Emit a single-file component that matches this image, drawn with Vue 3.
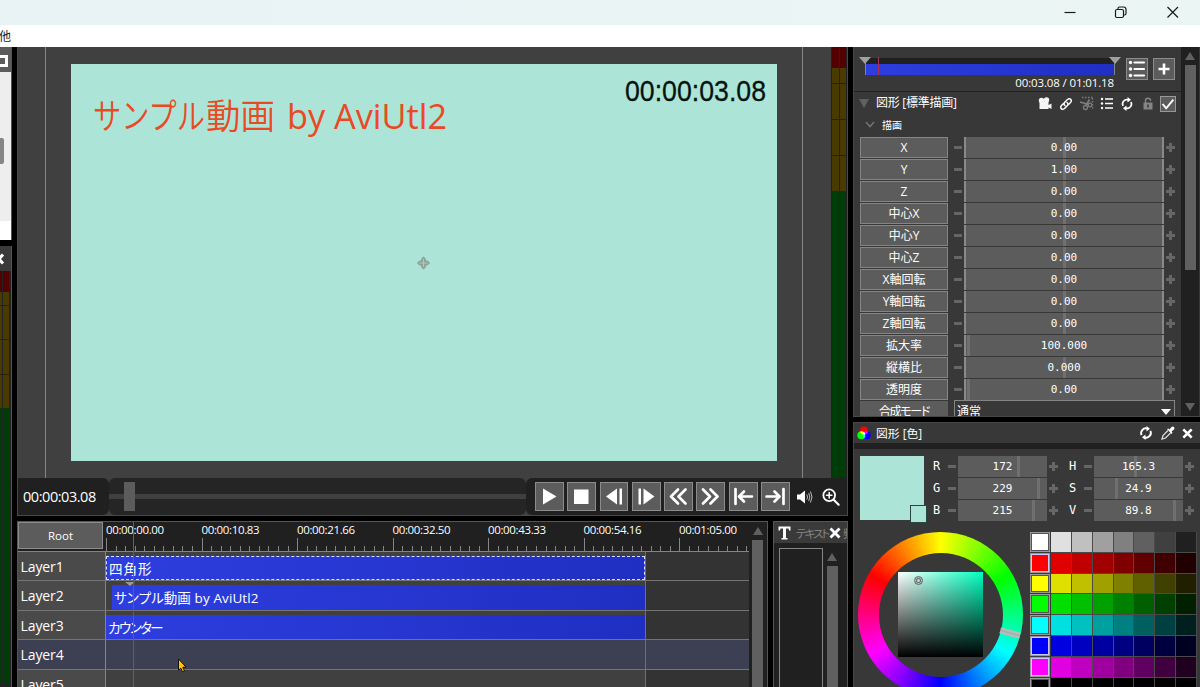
<script setup>
import { ref, computed } from 'vue';

const currentTime = ref('00:00:03.08');
const selectedLayer = ref(4);

const params = [
    { label: 'X', value: '0.00', mark: 50 },
    { label: 'Y', value: '1.00', mark: 50 },
    { label: 'Z', value: '0.00', mark: 50 },
    { label: '中心X', value: '0.00', mark: 50 },
    { label: '中心Y', value: '0.00', mark: 50 },
    { label: '中心Z', value: '0.00', mark: 50 },
    { label: 'X軸回転', value: '0.00', mark: 50 },
    { label: 'Y軸回転', value: '0.00', mark: 50 },
    { label: 'Z軸回転', value: '0.00', mark: 50 },
    { label: '拡大率', value: '100.000', mark: 1 },
    { label: '縦横比', value: '0.000', mark: 50 },
    { label: '透明度', value: '0.00', mark: 1 }
];

const rgb = [
    { label: 'R', value: '172', mark: 67 },
    { label: 'G', value: '229', mark: 90 },
    { label: 'B', value: '215', mark: 84 }
];
const hsv = [
    { label: 'H', value: '165.3', mark: 46 },
    { label: 'S', value: '24.9', mark: 25 },
    { label: 'V', value: '89.8', mark: 90 }
];

const layers = [
    { id: 1, clip: '四角形', offset: 0, selected: true },
    { id: 2, clip: 'サンプル動画 by AviUtl2', offset: 6 },
    { id: 3, clip: 'カウンター', offset: 0, kana: true },
    { id: 4 },
    { id: 5 }
];

const rulerLabels = ['00:00:00.00', '00:00:10.83', '00:00:21.66', '00:00:32.50', '00:00:43.33', '00:00:54.16', '00:01:05.00'];
const tickStep = 9.555;
const ticks = Array.from({ length: 68 }, (_, i) => ({
    x: Math.round(i * tickStep) + 0.5,
    top: i % 10 === 0 ? 16 : 24
}));

const transport = ['play', 'stop', 'prev', 'next', 'rew', 'ff', 'first', 'last'];

// Palette: one hue per row, darkening from left to right
const hues = [[1, 1, 1], [1, 0, 0], [1, 1, 0], [0, 1, 0], [0, 1, 1], [0, 0, 1], [1, 0, 1], [0, 0, 0]];
const levels = [255, 224, 192, 160, 128, 96, 64, 32];
const palette = computed(() =>
    hues.map(h => levels.map(l => `rgb(${h.map(c => c * l).join(',')})`))
);
</script>

<template>
<div class="app">
    <header class="titlebar">
        <svg width="120" height="25" viewBox="0 0 120 25" fill="none" stroke="#1a1a1a" stroke-width="1.2">
            <path d="M4.500 12.500H15.500" />
            <rect x="55.500" y="9.500" width="8" height="8" rx="1.500" />
            <path d="M58 9V8.500Q58 7 59.500 7H63.500Q66 7 66 9.500V13.500Q66 15 64.500 15H64" />
            <path d="M107.500 7L118 17.500M118 7L107.500 17.500" />
        </svg>
    </header>
    <nav class="menubar"><span>他</span></nav>

    <main class="body">
        <aside class="left">
            <div class="left-top">
                <div class="left-head"><i class="maxi"></i></div>
                <div class="left-list"><i></i></div>
            </div>
            <div class="left-meter">
                <div class="left-head2">
                    <svg width="12" height="24" viewBox="0 0 12 24"><path d="M-5 8.500L3 17.500M3 8.500L-5 17.500" stroke="#fff" stroke-width="3" /></svg>
                </div>
                <div class="meter-body"><div class="meter-col"></div><div class="meter-col narrow"></div></div>
            </div>
        </aside>

        <section class="center">
            <div class="preview-panel">
                <div class="preview">
                    <div class="stage">
                        <svg class="canvas" width="706" height="397" viewBox="0 0 706 397">
                            <text class="movie-title" y="64.500">
                                <tspan x="22" textLength="112" lengthAdjust="spacingAndGlyphs">サンプル</tspan><tspan x="135" textLength="69" lengthAdjust="spacingAndGlyphs">動画</tspan><tspan class="latin" x="216" textLength="160" lengthAdjust="spacingAndGlyphs">by AviUtl2</tspan>
                            </text>
                            <text class="counter" x="554" y="36.500" textLength="141" lengthAdjust="spacingAndGlyphs">{{ currentTime }}</text>
                            <path d="M352.500 192.800L354.500 195V197H356.500L358.700 199L356.500 201H354.500V203L352.500 205.200L350.500 203V201H348.500L346.300 199L348.500 197H350.500V195Z" fill="#8fa59e" stroke="#84988f" stroke-width=".7" />
                            <path d="M352.500 195V203M348.500 199H356.500" stroke="#b9cfc8" stroke-width=".8" />
                        </svg>
                    </div>
                    <div class="level">
                        <div class="level-col"></div>
                        <div class="level-col"></div>
                    </div>
                </div>

                <div class="controls">
                    <div class="timebox">{{ currentTime }}</div>
                    <div class="seek"><div class="seek-line"></div><div class="seek-thumb"></div></div>
                    <div class="buttons">
                        <button v-for="t in transport" :key="t" class="tbtn">
                            <svg width="27" height="27" viewBox="0 0 27 27" fill="#fff">
                                <path v-if="t === 'play'" d="M7 5.500L20.500 13.500L7 21.500Z" />
                                <rect v-else-if="t === 'stop'" x="6" y="6.500" width="14.500" height="14.500" />
                                <path v-else-if="t === 'prev'" d="M5 13.500L16 5.500V21.500ZM18.500 5.500H21V21.500H18.500Z" />
                                <path v-else-if="t === 'next'" d="M5.500 5.500H8V21.500H5.500ZM10.500 5.500L21.500 13.500L10.500 21.500Z" />
                                <g v-else fill="none" stroke="#fff" stroke-width="2.700" stroke-linecap="round" stroke-linejoin="round">
                                    <path v-if="t === 'rew'" d="M13 6.500L6 13.500L13 20.500M20.500 6.500L13.500 13.500L20.500 20.500" />
                                    <path v-else-if="t === 'ff'" d="M6 6.500L13 13.500L6 20.500M13.500 6.500L20.500 13.500L13.500 20.500" />
                                    <path v-else-if="t === 'first'" d="M5.500 6V21M22 13.500H9.500M14 8.500L9 13.500L14 18.500" />
                                    <path v-else d="M21.500 6V21M4.500 13.500H17M12.500 8.500L17.500 13.500L12.500 18.500" />
                                </g>
                            </svg>
                        </button>
                        <svg class="speaker" width="17" height="16" viewBox="0 0 17 16">
                            <path d="M1 5.500H4L9 1.500V14.500L4 10.500H1Z" fill="#fff" />
                            <path d="M10.800 5.500Q12.300 8 10.800 10.500M12.700 4Q15 8 12.700 12M14.500 2.500Q17.500 8 14.500 13.500" fill="none" stroke="#bbb" stroke-width="1" />
                        </svg>
                        <svg width="18" height="18" viewBox="0 0 20 20" fill="none" stroke="#fff" stroke-width="2" stroke-linecap="round">
                            <circle cx="8" cy="8" r="6.500" />
                            <path d="M13 13L18.500 18.500" stroke-width="2.400" />
                            <path d="M8 5V11M5 8H11" stroke-width="1.700" />
                        </svg>
                    </div>
                </div>
            </div>

            <div class="bottom">
                <div class="timeline">
                    <div class="tl-main">
                        <div class="tl-head">
                            <button class="root">Root</button>
                            <div class="ruler">
                                <div class="ruler-labels"><span v-for="l in rulerLabels" :key="l">{{ l }}</span></div>
                                <svg class="ticks" width="643" height="30" viewBox="0 0 643 30">
                                    <path v-for="t in ticks" :key="t.x" :d="`M${t.x} ${t.top}V30`" stroke="#858585" />
                                </svg>
                            </div>
                        </div>
                        <div v-for="l in layers" :key="l.id" class="layer" :class="{ active: l.id === selectedLayer }">
                            <div class="layer-name">Layer{{ l.id }}</div>
                            <div class="lane">
                                <div class="in-range">
                                    <div v-if="l.clip" class="clip" :class="{ selected: l.selected, kana: l.kana }" :style="{ marginLeft: l.offset + 'px' }">
                                        <span>{{ l.clip }}</span>
                                    </div>
                                </div>
                            </div>
                        </div>
                        <i class="playhead"></i>
                        <i class="keymark"></i>
                        <svg class="cursor" width="12" height="16" viewBox="0 0 12 16"><path d="M1.500 1L9 9L5.800 9.300L7.500 13L5.300 13.700L4 10.300L1.500 12Z" fill="#ffc20e" stroke="#111" /></svg>
                    </div>
                    <div class="vscroll tl-scroll"><i class="up"></i><i class="thumb"></i></div>
                </div>

                <div class="textpanel">
                    <div class="tp-head">
                        <svg width="13" height="14" viewBox="0 0 13 14"><path d="M.500 .500H12.500V4.500H11L10.500 2.500H8V12H9.500V13.500H3.500V12H5V2.500H2.500L2 4.500H.500Z" fill="#fff" /></svg>
                        <span class="tp-tab">テキスト</span>
                        <svg width="12" height="12" viewBox="0 0 12 12"><path d="M1.500 1.500L10.500 10.500M10.500 1.500L1.500 10.500" stroke="#fff" stroke-width="2.800" /></svg>
                        <span class="tp-rest">頻</span>
                    </div>
                    <div class="tp-body">
                        <div class="tp-list"></div>
                        <div class="vscroll tp-scroll"><i class="up"></i><i class="thumb"></i></div>
                    </div>
                </div>
            </div>
        </section>

        <aside class="right">
            <div class="props">
                <div class="props-main">
                    <div class="track-row">
                        <div class="track-col">
                            <div class="track">
                                <div class="track-bar"></div>
                                <i class="tri t1"></i><i class="tri t2"></i><i class="track-now"></i>
                            </div>
                            <div class="track-time">00:03.08 / 01:01.18</div>
                        </div>
                        <button class="sq">
                            <svg width="20" height="20" viewBox="0 0 20 20" stroke="#fff" stroke-width="2.200" stroke-linecap="round" fill="#fff">
                                <path d="M7.500 3.500H17M7.500 10H17M7.500 16.500H17" />
                                <g stroke="none"><circle cx="3.500" cy="3.500" r="1.700" /><circle cx="3.500" cy="10" r="1.700" /><circle cx="3.500" cy="16.500" r="1.700" /></g>
                            </svg>
                        </button>
                        <button class="sq">
                            <svg width="20" height="20" viewBox="0 0 20 20"><path d="M10 4.500V15.500M4.500 10H15.500" stroke="#fff" stroke-width="2.600" /></svg>
                        </button>
                    </div>
                    <div class="obj-head">
                        <i class="caret"></i>
                        <span class="obj-name">図形 [標準描画]</span>
                        <div class="obj-icons">
                            <svg width="14" height="13" viewBox="0 0 14 13" fill="#f4f4f4">
                                <circle cx="3.500" cy="3.500" r="2.700" /><circle cx="8.500" cy="3" r="2.700" />
                                <path d="M1.500 5H10.500V8L13.500 6.500V12L10.500 10.500V12H1.500Z" />
                            </svg>
                            <svg width="14" height="14" viewBox="0 0 14 14" fill="none" stroke="#fff" stroke-width="1.500" stroke-linecap="round">
                                <path d="M6 8.500C4.500 7.500 5 6 6 5L8.500 2.500C11 .500 13.500 3 11.500 5.500L9.500 7.500M8 5.500C9.500 6.500 9 8 8 9L5.500 11.500C3 13.500 .500 11 2.500 8.500L4.500 6.500" />
                            </svg>
                            <svg width="15" height="15" viewBox="0 0 15 15" fill="none" stroke="#7d7d7d" stroke-width="1.300">
                                <path d="M3 1.500H14M13.500 2V13" stroke-dasharray="1.500 1.500" />
                                <path d="M1 6L9.500 8.500M10.500 3.500L7 9.500" stroke-width="1.800" />
                                <circle cx="6.500" cy="11.500" r="2" /><circle cx="11" cy="9" r="1.800" />
                            </svg>
                            <svg width="14" height="13" viewBox="0 0 14 13" stroke="#fff" stroke-width="1.700" fill="#fff">
                                <path d="M5 2H13M5 6.500H13M5 11H13" />
                                <g stroke="none"><circle cx="2" cy="2" r="1.200" /><circle cx="2" cy="6.500" r="1.200" /><circle cx="2" cy="11" r="1.200" /></g>
                            </svg>
                            <svg width="14" height="14" viewBox="0 0 14 14" fill="none" stroke="#fff" stroke-width="1.700">
                                <path d="M3 9A4.400 4.400 0 0 1 8 2.800M11 5A4.400 4.400 0 0 1 6 11.200" />
                                <path d="M7.500 0L11 2.800L7.500 5.500ZM6.500 14L3 11.200L6.500 8.500Z" fill="#fff" stroke="none" />
                            </svg>
                            <svg class="lock" width="12" height="13" viewBox="0 0 12 13">
                                <path d="M3.500 6V3.500Q3.500 1.200 6 1.200T8.500 3.500V4" fill="none" stroke="#858585" stroke-width="1.400" />
                                <rect x="1.500" y="5.500" width="9" height="7" fill="#858585" /><path d="M6 7.500V10.500" stroke="#3a3a3a" stroke-width="1.600" />
                            </svg>
                            <span class="check">
                                <svg width="14" height="14" viewBox="0 0 13 13"><path d="M1.500 6.500L4.800 10.500L11.500 2.500" fill="none" stroke="#fff" stroke-width="1.800" /></svg>
                            </span>
                        </div>
                    </div>
                    <div class="group-head">
                        <svg width="10" height="7" viewBox="0 0 10 7"><path d="M1 1L5 5.500L9 1" fill="none" stroke="#747474" stroke-width="1.500" /></svg>
                        <span>描画</span>
                    </div>
                    <div class="params">
                        <div v-for="p in params" :key="p.label" class="param">
                            <div class="p-label">{{ p.label }}</div>
                            <i class="minus"></i>
                            <div class="p-field">
                                <i class="p-mark" :style="{ left: p.mark + '%' }"></i>
                                <span>{{ p.value }}</span>
                            </div>
                            <i class="plus"></i>
                        </div>
                        <div class="param">
                            <div class="p-label flat">合成モード</div>
                            <div class="select"><span>通常</span><i></i></div>
                        </div>
                    </div>
                </div>
                <div class="vscroll props-scroll"><i class="up"></i><i class="thumb"></i><i class="down"></i></div>
            </div>

            <div class="colors">
                <div class="c-head">
                    <svg width="14" height="14" viewBox="0 0 14 14" class="rgbicon">
                        <circle cx="7" cy="4.500" r="4" fill="#f00" /><circle cx="4.300" cy="9.300" r="4" fill="#0f0" /><circle cx="9.700" cy="9.300" r="4" fill="#00f" />
                    </svg>
                    <span>図形 [色]</span>
                    <div class="c-icons">
                        <svg width="14" height="14" viewBox="0 0 14 14" fill="none" stroke="#fff" stroke-width="1.900">
                            <path d="M2.600 9.200A4.800 4.800 0 0 1 8.200 2.500M11.400 4.800A4.800 4.800 0 0 1 5.800 11.500" />
                            <path d="M7.500 0L11 2.800L7.500 5.500ZM6.500 14L3 11.200L6.500 8.500Z" fill="#fff" stroke="none" />
                        </svg>
                        <svg width="14" height="14" viewBox="0 0 14 14">
                            <path d="M7 4.500L2 9.500L1 13L4.500 12L9.500 7" fill="none" stroke="#ddd" stroke-width="1.300" />
                            <path d="M6 3L7.500 2.500L8.500 3.500L10.500 1Q12 0 13 1T13 3.500L10.500 5.500L11.500 6.500L10.500 8Z" fill="#fff" />
                        </svg>
                        <svg width="11" height="11" viewBox="0 0 11 11"><path d="M1.300 1.300L9.700 9.700M9.700 1.300L1.300 9.700" stroke="#fff" stroke-width="2.600" /></svg>
                    </div>
                </div>
                <div class="c-strip"></div>
                <div class="c-values">
                    <div class="swatch"><i></i></div>
                    <div v-for="(list, i) in [rgb, hsv]" :key="i" class="c-group">
                        <div v-for="c in list" :key="c.label" class="c-row">
                            <b>{{ c.label }}</b>
                            <i class="minus"></i>
                            <div class="c-field"><i class="p-mark" :style="{ left: c.mark + '%' }"></i><span>{{ c.value }}</span></div>
                            <i class="plus"></i>
                        </div>
                    </div>
                </div>
                <div class="c-picker">
                    <div class="wheel">
                        <div class="wheel-hole"><div class="sv"></div></div>
                        <i class="sv-mark"></i>
                        <i class="hue-mark"></i>
                    </div>
                    <div class="palette">
                        <div v-for="(row, r) in palette" :key="r" class="pal-row">
                            <i v-for="(c, k) in row" :key="k" class="cell" :class="{ first: k === 0, light: r === 1 || r === 5 || r === 6 }" :style="{ background: c }"></i>
                        </div>
                    </div>
                </div>
            </div>
        </aside>
    </main>
</div>
</template>

<style>
body {
    background: #000;
    overflow: hidden;
}
</style>

<style scoped>
* {
    box-sizing: border-box;
}

.app {
    width: 1200px;
    height: 687px;
    overflow: hidden;
    display: flex;
    flex-direction: column;
    background: #000;
    color: #fff;
    font-family: "Open Sans", "Noto Sans CJK JP", sans-serif;
    font-size: 12px;
}

svg {
    display: block;
    flex: none;
}

button {
    padding: 0;
    color: #fff;
    font: inherit;
}

.titlebar {
    height: 25px;
    flex: none;
    display: flex;
    justify-content: flex-end;
    padding-right: 20px;
    background: linear-gradient(90deg, #e9f3f6, #ebf5f3);
}

.menubar {
    height: 22px;
    flex: none;
    background: #fff;
    color: #222;
    line-height: 23px;
}

.menubar span {
    margin-left: -1px;
}

.body {
    flex: 1;
    min-height: 0;
    display: flex;
    gap: 5px;
}

/* left column */
.left {
    width: 12px;
    flex: none;
    display: flex;
    flex-direction: column;
    gap: 6px;
}

.left-top {
    height: 193px;
    background: #fff;
    border-right: 1px solid #555;
}

.left-head {
    height: 25px;
    background: #5c5c5c;
    padding-top: 8px;
}

.maxi {
    display: block;
    width: 8px;
    height: 12px;
    border: 3px solid #fff;
    border-left: 0;
}

.left-list {
    height: 149px;
    background: #eee;
    padding-top: 66px;
}

.left-list i {
    display: block;
    width: 4px;
    height: 26px;
    background: #858585;
    border-radius: 0 2px 2px 0;
}

.left-meter {
    flex: 1;
    display: flex;
    flex-direction: column;
    background: #222;
    border-right: 1px solid #555;
}

.left-head2 {
    height: 25px;
    background: #3a3a3a;
}

.meter-body {
    height: 412px;
    display: flex;
    gap: 1px;
}

.meter-col {
    width: 2px;
    background:
        linear-gradient(#2c2200, #2c2200) 0 34px / 100% 1px no-repeat,
        linear-gradient(#2c2200, #2c2200) 0 68px / 100% 1px no-repeat,
        linear-gradient(#2c2200, #2c2200) 0 103px / 100% 1px no-repeat,
        linear-gradient(#550000 21px, #493a00 21px 137px, #003c08 137px);
}

.meter-col.narrow {
    width: 6px;
}

/* preview */
.center {
    width: 831px;
    flex: none;
    display: flex;
    flex-direction: column;
    gap: 5px;
}

.preview-panel {
    height: 469px;
    flex: none;
    border: 1px solid #484848;
    border-top: 0;
}

.preview {
    height: 431px;
    display: flex;
    justify-content: space-between;
    background: #404040;
}

.stage {
    width: 758px;
    margin-left: 27px;
    padding: 17px 0 0 25px;
    border: 1px solid #858585;
    border-width: 0 1px;
}

.canvas {
    background: #ace5d7;
}

.movie-title {
    font-size: 35px;
    fill: #e94a24;
    font-weight: 350;
}

.movie-title .latin {
    font-weight: 400;
}

.counter {
    font-family: "Liberation Sans", sans-serif;
    font-size: 29.500px;
    fill: #07130f;
    stroke: #07130f;
    stroke-width: 0.300px;
}

.level {
    width: 16px;
    display: flex;
    gap: 1px;
    padding: 0 1px;
    background: #222;
}

.level-col {
    flex: 1;
    background:
        linear-gradient(#2c2200, #2c2200) 0 36px / 100% 1px no-repeat,
        linear-gradient(#2c2200, #2c2200) 0 72px / 100% 1px no-repeat,
        linear-gradient(#2c2200, #2c2200) 0 108px / 100% 1px no-repeat,
        linear-gradient(#550000 21px, #493a00 21px 144px, #003c08 144px);
}

.controls {
    height: 37px;
    display: flex;
    align-items: center;
    background: #404040;
}

.timebox {
    width: 91px;
    height: 37px;
    flex: none;
    line-height: 38px;
    padding-left: 5px;
    background: #202020;
    border-radius: 0 6px 6px 0;
    font-size: 14.500px;
    letter-spacing: -0.450px;
}

.seek {
    width: 417px;
    height: 37px;
    flex: none;
    display: flex;
    align-items: center;
    background: #252525;
    border-radius: 6px;
    position: relative;
}

.seek-line {
    width: 100%;
    height: 5px;
    background: #404040;
}

.seek-thumb {
    position: absolute;
    left: 15px;
    top: 4px;
    width: 11px;
    height: 29px;
    background: #5c5c5c;
}

.buttons {
    height: 37px;
    flex: 1;
    display: flex;
    align-items: center;
    gap: 3.400px;
    padding-left: 9px;
    background: #202020;
    border-radius: 6px 0 0 6px;
}

.tbtn {
    width: 28.900px;
    height: 29px;
    flex: none;
    border: 1px solid #8c8c8c;
    background: #5c5c5c;
}

.speaker {
    margin: 0 5px 0 3px;
}

/* timeline */
.bottom {
    flex: 1;
    min-height: 0;
    display: flex;
    gap: 5px;
}

.timeline {
    width: 751px;
    flex: none;
    display: flex;
    background: #202020;
    border: 1px solid #555;
    border-bottom: 0;
    overflow: hidden;
}

.tl-main {
    width: 731px;
    flex: none;
    position: relative;
}

.tl-head {
    height: 30px;
    display: flex;
    border-bottom: 1px solid #858585;
}

.root {
    width: 85px;
    height: 27px;
    margin-right: 3px;
    flex: none;
    border: 1px solid #8c8c8c;
    background: #5c5c5c;
    font-size: 11.500px;
    line-height: 25px;
}

.ruler {
    flex: 1;
    min-width: 0;
    display: grid;
}

.ruler > * {
    grid-area: 1 / 1;
}

.ruler-labels {
    display: flex;
    font-size: 11.500px;
    letter-spacing: -0.350px;
    line-height: 16px;
}

.ruler-labels span {
    width: 95.500px;
    flex: none;
}

.layer {
    height: 29.400px;
    display: flex;
    border-bottom: 1px solid #757575;
}

.layer-name {
    width: 88px;
    flex: none;
    padding-left: 2.500px;
    border-right: 1px solid #858585;
    background: #4a4a4a;
    font-size: 14px;
    line-height: 30px;
    letter-spacing: -0.100px;
}

.lane {
    flex: 1;
    background: #333;
}

.in-range {
    width: 540px;
    height: 100%;
    padding: 4px 0 0 0;
    background: #404040;
    border-right: 1px solid #707070;
}

.active .layer-name,
.active .in-range,
.active .lane {
    background: #3d4053;
}

.clip {
    height: 100%;
    padding-left: 2px;
    background: linear-gradient(90deg, #2e3edf, #1f2fc2);
    font-size: 13.500px;
    line-height: 27px;
    font-feature-settings: "palt";
    letter-spacing: 0.100px;
    white-space: nowrap;
}

.clip.kana {
    letter-spacing: -1.500px;
}

.clip.selected {
    border: 1.500px dashed #d8dcff;
    line-height: 24px;
    letter-spacing: 1px;
}

.playhead {
    position: absolute;
    z-index: 2;
    left: 115px;
    top: 0;
    width: 1px;
    height: 170px;
    background: #c0383c;
}

.keymark {
    position: absolute;
    left: 107px;
    top: 60px;
    border: 5px solid transparent;
    border-top: 4px solid #999;
    border-bottom: 0;
}

.cursor {
    position: absolute;
    left: 159px;
    top: 136px;
}

.vscroll {
    display: flex;
    flex-direction: column;
    align-items: center;
    background: #202020;
}

.vscroll .up {
    border: 5.500px solid transparent;
    border-bottom: 8px solid #606060;
    border-top: 0;
    margin-bottom: 5px;
}

.vscroll .down {
    border: 5.500px solid transparent;
    border-top: 8px solid #606060;
    border-bottom: 0;
}

.vscroll .thumb {
    width: 11px;
    flex: 1;
    background: #606060;
}

.tl-scroll {
    width: 17px;
    padding-top: 5px;
}

.textpanel {
    width: 75px;
    display: flex;
    flex-direction: column;
    border: 1px solid #555;
    border-bottom: 0;
    background: #202020;
    overflow: hidden;
}

.tp-head {
    height: 21px;
    display: flex;
    align-items: center;
    padding-left: 4px;
    background: #3a3a3a;
    color: #858585;
    font-size: 11.500px;
}

.tp-tab {
    width: 34px;
    margin: 0 0 0 5px;
    overflow: hidden;
    white-space: nowrap;
    letter-spacing: -1.900px;
    font-feature-settings: "palt";
}

.tp-rest {
    margin-left: 2px;
    width: 4px;
    overflow: hidden;
}

.tp-body {
    flex: 1;
    display: flex;
    padding: 5px 0 0 5px;
}

.tp-list {
    width: 44px;
    border: 1px solid #858585;
    border-bottom: 0;
}

.tp-scroll {
    width: 18px;
    padding-top: 5px;
}

/* object settings */
.right {
    flex: 1;
    display: flex;
    flex-direction: column;
    gap: 5px;
}

.props {
    height: 370px;
    flex: none;
    display: flex;
    border: 1px solid #484848;
    border-top: 0;
    background: #383838;
    overflow: hidden;
}

.props-main {
    width: 327px;
    height: 369px;
    overflow: hidden;
}

.track-row {
    height: 45px;
    display: flex;
    gap: 5px;
    padding: 11px 0 0 11px;
    border-bottom: 1px solid #222;
}

.track-col {
    width: 250px;
    margin-right: 6px;
}

.track {
    height: 17px;
    position: relative;
    background: #202020;
    padding-top: 6px;
    border-left: 1px solid #858585;
    border-right: 1px solid #858585;
}

.track-bar {
    height: 11px;
    background: linear-gradient(90deg, #2e3edf, #1f2fc2);
}

.tri {
    position: absolute;
    top: -1px;
    border: 6px solid transparent;
    border-top: 7px solid #a0a0a0;
    border-bottom: 0;
}

.t1 {
    left: -7px;
}

.t2 {
    right: -7px;
}

.track-now {
    position: absolute;
    left: 12px;
    top: -1px;
    width: 1px;
    height: 18px;
    background: #a8304a;
}

.track-time {
    text-align: right;
    font-size: 11.500px;
    line-height: 15px;
    letter-spacing: -0.130px;
    padding-right: 1px;
}

.sq {
    width: 22px;
    height: 22px;
    flex: none;
    border: 1px solid #8c8c8c;
    background: #5c5c5c;
}

.obj-head {
    height: 23px;
    display: flex;
    align-items: center;
    padding-left: 5px;
}

.caret {
    border: 5.500px solid transparent;
    border-top: 9px solid #606060;
    border-bottom: 0;
}

.obj-name {
    margin-left: 7px;
    font-size: 12px;
    letter-spacing: -0.250px;
    line-height: 16px;
    padding-bottom: 1px;
    white-space: nowrap;
}

.obj-icons {
    margin-left: auto;
    margin-right: 5px;
    display: flex;
    align-items: center;
    gap: 6.200px;
}

.lock {
    margin-left: 1.500px;
}

.check {
    width: 16px;
    height: 16px;
    border: 1px solid #999;
    background: #5c5c5c;
}

.group-head {
    height: 21px;
    display: flex;
    align-items: center;
    gap: 7px;
    padding: 0 0 2px 11px;
    font-size: 10px;
}

.params {
    padding-left: 6px;
}

.param {
    height: 22px;
    display: flex;
    align-items: center;
}

.p-label {
    width: 88px;
    height: 21px;
    flex: none;
    border: 1px solid #858585;
    background: #5c5c5c;
    text-align: center;
    font-size: 12px;
    line-height: 19px;
    font-feature-settings: "palt";
}

.p-label.flat {
    border-color: #5c5c5c;
    letter-spacing: -1.300px;
}

.minus {
    width: 8px;
    height: 3px;
    flex: none;
    margin: 0 6px;
    background: #666;
}

.plus {
    width: 9px;
    height: 9px;
    flex: none;
    margin-left: 2px;
    background:
        linear-gradient(#666, #666) 0 3px / 9px 3px no-repeat,
        linear-gradient(#666, #666) 3px 0 / 3px 9px no-repeat;
}

.param .minus {
    margin-right: 2px;
}

.p-field,
.c-field {
    position: relative;
    width: 200px;
    height: 21px;
    background: #5c5c5c;
    border: solid #8a8a8a;
    border-width: 0 2px;
    text-align: center;
    font-family: "DejaVu Sans Mono", monospace;
    font-size: 11px;
    line-height: 21px;
}

.p-field span,
.c-field span {
    position: relative;
}

.p-mark {
    position: absolute;
    top: 0;
    width: 3px;
    height: 21px;
    margin-left: -1px;
    background: #707070;
}

.select {
    width: 221px;
    height: 22px;
    margin-left: 6px;
    display: flex;
    align-items: center;
    justify-content: space-between;
    padding: 1px 3px 0 2px;
    border: 1px solid #858585;
    background: #383838;
    font-size: 12px;
    line-height: 18px;
}

.select i {
    border: 5px solid transparent;
    border-top: 6px solid #fff;
    border-bottom: 0;
}

.props-scroll {
    width: 18px;
    padding-top: 5px;
}

.props-scroll .thumb {
    flex: none;
    height: 205px;
}

.props-scroll .down {
    margin-top: 133px;
}

/* colour panel */
.colors {
    flex: 1;
    min-height: 0;
    border: 1px solid #484848;
    border-bottom: 0;
    background: #383838;
    overflow: hidden;
}

.c-head {
    height: 20px;
    display: flex;
    align-items: center;
    gap: 5px;
    padding: 0 6px 0 3px;
    font-size: 11.800px;
    line-height: 18px;
}

.rgbicon circle {
    mix-blend-mode: screen;
}

.rgbicon {
    isolation: isolate;
}

.c-icons {
    margin-left: auto;
    margin-right: 6px;
    display: flex;
    align-items: center;
    gap: 7.500px;
}

.c-strip {
    height: 6px;
    background: #202020;
}

.c-values {
    display: flex;
    padding: 6px 0 0 6px;
}

.swatch {
    position: relative;
    width: 64px;
    height: 64px;
    margin: 1px 9px 0 0;
    flex: none;
    background: #ace5d7;
}

.swatch i {
    position: absolute;
    right: -3px;
    bottom: -3px;
    width: 17px;
    height: 18px;
    border: 1px solid #27483f;
    background: #ace5d7;
}

.c-group {
    width: 136px;
    flex: none;
}

.c-row {
    height: 22px;
    display: flex;
    align-items: center;
}

.c-row b {
    width: 9px;
    font: 12px "DejaVu Sans Mono", monospace;
}

.c-row .minus {
    margin-right: 2px;
}

.c-field {
    width: 89px;
    border: 0;
}

.c-picker {
    display: flex;
    padding: 11px 0 0 4px;
}

.wheel {
    position: relative;
    width: 165px;
    height: 165px;
    margin-right: 7px;
    flex: none;
    display: flex;
    align-items: center;
    justify-content: center;
    border-radius: 50%;
    background: conic-gradient(from -60deg, #f00, #ff0, #0f0, #0ff, #00f, #f0f, #f00);
}

.wheel-hole {
    width: 124px;
    height: 124px;
    display: flex;
    align-items: center;
    justify-content: center;
    border-radius: 50%;
    background: #383838;
}

.sv {
    width: 85px;
    height: 85px;
    background: linear-gradient(transparent, #000), linear-gradient(90deg, #fff, #00ffc1);
}

.sv-mark {
    position: absolute;
    left: 56px;
    top: 44px;
    width: 9px;
    height: 9px;
    border: 1px solid #666;
    border-radius: 50%;
    box-shadow: inset 0 0 0 1px #b5c9c4, inset 0 0 0 2px #666;
}

.hue-mark {
    position: absolute;
    left: 142px;
    top: 98px;
    width: 20px;
    height: 6px;
    border: solid #bbb;
    border-width: 2px 0;
    background: #9cb5ae;
    transform: rotate(15.300deg);
}

.palette {
    width: 167px;
    flex: none;
}

.pal-row {
    display: flex;
    height: 20.800px;
}

.cell {
    width: 20.900px;
    flex: none;
    border: solid #4a4a4a;
    border-width: 0 1px 1px 0;
}

.cell.first {
    border: 1px solid #999;
    box-shadow: inset 0 0 0 1px #555;
    margin-right: 1px;
    width: 19.900px;
    margin-bottom: 1px;
}

.cell.first.light {
    box-shadow: inset 0 0 0 1px #c8c8ff;
}
</style>
